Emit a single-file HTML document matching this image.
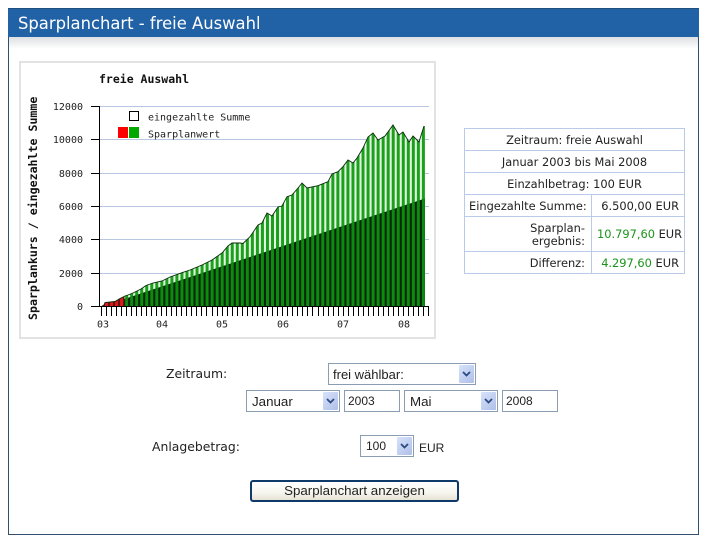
<!DOCTYPE html>
<html lang="de">
<head>
<meta charset="utf-8">
<title>Sparplanchart - freie Auswahl</title>
<style>
html,body{margin:0;padding:0;background:#fff;width:709px;height:541px;overflow:hidden}
body{position:relative;font-family:"DejaVu Sans","Liberation Sans",sans-serif;color:#222}
.a{position:absolute}
#frame{left:8px;top:8px;width:689px;height:526px;border:1px solid #34506f;border-top:0}
#head{left:8px;top:8px;width:691px;height:29px;background:#2162a6;border-top:1px solid #1f4f7c;box-sizing:border-box}
#title{left:18px;top:15px;font-size:16.4px;line-height:18px;color:#fff;white-space:nowrap}
#fade{left:9px;top:37px;width:689px;height:12px;background:linear-gradient(#dedfe2,#fff)}
#box{left:19px;top:61px;width:413px;height:274px;border:2px solid #e2e2e2}
table{position:absolute;left:464px;top:128px;border-collapse:collapse;table-layout:fixed;width:220px;font-size:11.4px;color:#222}
td{border:1px solid #b9cbe8;padding:1px 5px 0;text-align:right;height:20px;line-height:13px;white-space:nowrap;box-sizing:content-box}
td.c{text-align:center}
td.l{padding-right:6px;padding-left:4px}
.g{color:#1a941a}
.lbl{font-size:12.4px;line-height:14px;color:#222;white-space:nowrap}
.sel,.inp{position:absolute;box-sizing:border-box;border:1px solid #8a9db3;background:#fff;font:12px/20px "Liberation Sans",sans-serif;color:#222;padding-left:5px;white-space:nowrap}
.arr{position:absolute;right:1px;top:1px;bottom:1px;width:15px;background:linear-gradient(135deg,#d7e2fa,#aebfe8);border-radius:1px}
.arr svg{position:absolute;left:3px;top:50%;margin-top:-3px}
#btn{left:250px;top:480px;width:209px;height:22px;box-sizing:border-box;border:2px solid #0d3a68;border-radius:3px;background:linear-gradient(#fff 0%,#f6f5ee 60%,#e6e3d4 100%);font:13.33px/18px "Liberation Sans",sans-serif;color:#222;text-align:center}
</style>
</head>
<body>
<div class="a" id="frame"></div>
<div class="a" id="head"></div>
<div class="a" id="title">Sparplanchart - freie Auswahl</div>
<div class="a" id="fade"></div>
<div class="a" id="box"></div>

<svg class="a" style="left:0;top:0" width="709" height="541" viewBox="0 0 709 541">
<defs>
<clipPath id="cv"><polygon points="101.5,306.5 104,305 105,302.5 115,301.5 120,298.5 125,296 128,295 133,293 141,289 146,285.5 153,283 162,281 170,277 182,272.7 190,270 202,265 212,260 222,253 228,246 232,243 240,243 243,243.5 250,236.7 258,225 262,223 267,213 272,216 278,207 282,206 287,196.7 292,195 298,188 302,183 307,188 318,185.7 328,181.7 332,174 338,171.7 343,166.7 348,160 353,163 357,158 363,148 368,137 373,133 378,140 385,136 393,125 399,135 403,132 409,142 413,136 419,142 424,126 425,126 425,306.5"/></clipPath>
<clipPath id="ci"><polygon points="124.5,299 425,198.5 425,306.5 124.5,306.5"/></clipPath>
<clipPath id="cr"><polygon points="101.5,306.5 104,305 105,302.5 115,301.5 120,298.5 124.5,296.5 124.5,306.5"/></clipPath>
</defs>
<g stroke="#b9c6e2" stroke-width="1">
<path d="M99 106.5H429M99 139.5H429M99 173.5H429M99 206.5H429M99 239.5H429M99 273.5H429"/>
</g>
<g clip-path="url(#cv)">
<rect x="100" y="100" width="326" height="207" fill="#e2f8e2"/>
<path d="M105 200H426" fill="none" stroke="#1ca01c" stroke-width="220" stroke-dasharray="3 2.03"/>
</g>
<g clip-path="url(#ci)">
<rect x="100" y="190" width="326" height="117" fill="#06250a"/>
<path d="M105 250H426" fill="none" stroke="#0e8a0e" stroke-width="120" stroke-dasharray="3 2.03"/>
</g>
<g clip-path="url(#cr)">
<rect x="100" y="290" width="25" height="17" fill="#5a1414"/>
<path d="M105 300H125" fill="none" stroke="#e01818" stroke-width="20" stroke-dasharray="3 2.03"/>
</g>
<polyline fill="none" stroke="#0a2a0a" stroke-width="0.9" points="101.5,306.5 104,305 105,302.5 115,301.5 120,298.5 125,296 128,295 133,293 141,289 146,285.5 153,283 162,281 170,277 182,272.7 190,270 202,265 212,260 222,253 228,246 232,243 240,243 243,243.5 250,236.7 258,225 262,223 267,213 272,216 278,207 282,206 287,196.7 292,195 298,188 302,183 307,188 318,185.7 328,181.7 332,174 338,171.7 343,166.7 348,160 353,163 357,158 363,148 368,137 373,133 378,140 385,136 393,125 399,135 403,132 409,142 413,136 419,142 424,126"/>
<g stroke="#000" stroke-width="1" fill="none">
<path d="M91 106.5H99.5M91 139.5H99.5M91 173.5H99.5M91 206.5H99.5M91 239.5H99.5M91 273.5H99.5"/>
<path d="M99.5 106V306.5M91 306.5H429"/>
<path d="M101.5 306V316M106.5 306V316M111.5 306V316M116.5 306V316M121.5 306V316M126.5 306V316M131.5 306V316M136.5 306V316M141.5 306V316M146.5 306V316M151.5 306V316M156.5 306V316M161.5 306V316M166.5 306V316M171.5 306V316M176.5 306V316M181.5 306V316M186.5 306V316M191.5 306V316M196.5 306V316M201.5 306V316M206.5 306V316M212.5 306V316M217.5 306V316M222.5 306V316M227.5 306V316M232.5 306V316M237.5 306V316M242.5 306V316M247.5 306V316M252.5 306V316M257.5 306V316M262.5 306V316M267.5 306V316M272.5 306V316M277.5 306V316M282.5 306V316M287.5 306V316M292.5 306V316M297.5 306V316M302.5 306V316M307.5 306V316M312.5 306V316M318.5 306V316M323.5 306V316M328.5 306V316M333.5 306V316M338.5 306V316M343.5 306V316M348.5 306V316M353.5 306V316M358.5 306V316M363.5 306V316M368.5 306V316M373.5 306V316M378.5 306V316M383.5 306V316M388.5 306V316M393.5 306V316M398.5 306V316M403.5 306V316M408.5 306V316M413.5 306V316M418.5 306V316M423.5 306V316M428.5 306V316"/>
</g>
<rect x="129.5" y="111.5" width="9" height="9" fill="#fff" stroke="#000"/>
<rect x="118" y="127" width="10" height="11" fill="#ff0000"/>
<rect x="129" y="127" width="10" height="11" fill="#00a800"/>
<g font-family="'DejaVu Sans Mono','Liberation Mono',monospace" fill="#111">
<text x="99" y="83" font-size="11.5" font-weight="bold">freie Auswahl</text>
<text transform="translate(37,320) rotate(-90)" font-size="11.6" font-weight="bold">Sparplankurs / eingezahlte Summe</text>
<g font-size="10" fill="#222">
<text x="148" y="120.5">eingezahlte Summe</text>
<text x="148" y="137.5">Sparplanwert</text>
<g text-anchor="end">
<text x="83" y="110">12000</text>
<text x="83" y="143">10000</text>
<text x="83" y="177">8000</text>
<text x="83" y="210">6000</text>
<text x="83" y="243">4000</text>
<text x="83" y="277">2000</text>
<text x="83" y="310">0</text>
</g>
<g text-anchor="middle">
<text x="103" y="327.5">03</text>
<text x="162" y="327.5">04</text>
<text x="222" y="327.5">05</text>
<text x="283" y="327.5">06</text>
<text x="343" y="327.5">07</text>
<text x="404" y="327.5">08</text>
</g>
</g>
</g>
</svg>

<table>
<colgroup><col style="width:127px"><col style="width:93px"></colgroup>
<tr><td class="c" colspan="2">Zeitraum: freie Auswahl</td></tr>
<tr><td class="c" colspan="2">Januar 2003 bis Mai 2008</td></tr>
<tr><td class="c" colspan="2">Einzahlbetrag: 100 EUR</td></tr>
<tr><td class="l">Eingezahlte Summe:</td><td>6.500,00 EUR</td></tr>
<tr><td class="l" style="height:33px">Sparplan-<br>ergebnis:</td><td><span class="g">10.797,60</span> EUR</td></tr>
<tr><td class="l">Differenz:</td><td><span class="g">4.297,60</span> EUR</td></tr>
</table>

<div class="a lbl" style="left:166px;top:367px">Zeitraum:</div>
<div class="a lbl" style="left:152px;top:440px">Anlagebetrag:</div>

<div class="sel" style="left:328px;top:363px;width:148px;height:22px;font-size:13px;padding-left:4px;line-height:21px">frei wählbar:<span class="arr"><svg width="9" height="6" viewBox="0 0 9 6"><path d="M1 1L4.5 4.5L8 1" fill="none" stroke="#2b4a80" stroke-width="1.8"/></svg></span></div>
<div class="sel" style="left:246px;top:390px;width:94px;height:22px;font-size:13.33px;line-height:22px">Januar<span class="arr"><svg width="9" height="6" viewBox="0 0 9 6"><path d="M1 1L4.5 4.5L8 1" fill="none" stroke="#2b4a80" stroke-width="1.8"/></svg></span></div>
<div class="inp" style="left:344px;top:390px;width:56px;height:22px;padding-left:3px;line-height:21px">2003</div>
<div class="sel" style="left:404px;top:390px;width:94px;height:22px;font-size:13.33px;line-height:22px">Mai<span class="arr"><svg width="9" height="6" viewBox="0 0 9 6"><path d="M1 1L4.5 4.5L8 1" fill="none" stroke="#2b4a80" stroke-width="1.8"/></svg></span></div>
<div class="inp" style="left:502px;top:390px;width:56px;height:22px;padding-left:3px;line-height:21px">2008</div>
<div class="sel" style="left:360px;top:435px;width:54px;height:22px">100<span class="arr"><svg width="9" height="6" viewBox="0 0 9 6"><path d="M1 1L4.5 4.5L8 1" fill="none" stroke="#2b4a80" stroke-width="1.8"/></svg></span></div>
<div class="a" style="left:419px;top:441px;font:12px/14px 'Liberation Sans',sans-serif;color:#222">EUR</div>
<div class="a" id="btn">Sparplanchart anzeigen</div>
</body>
</html>
